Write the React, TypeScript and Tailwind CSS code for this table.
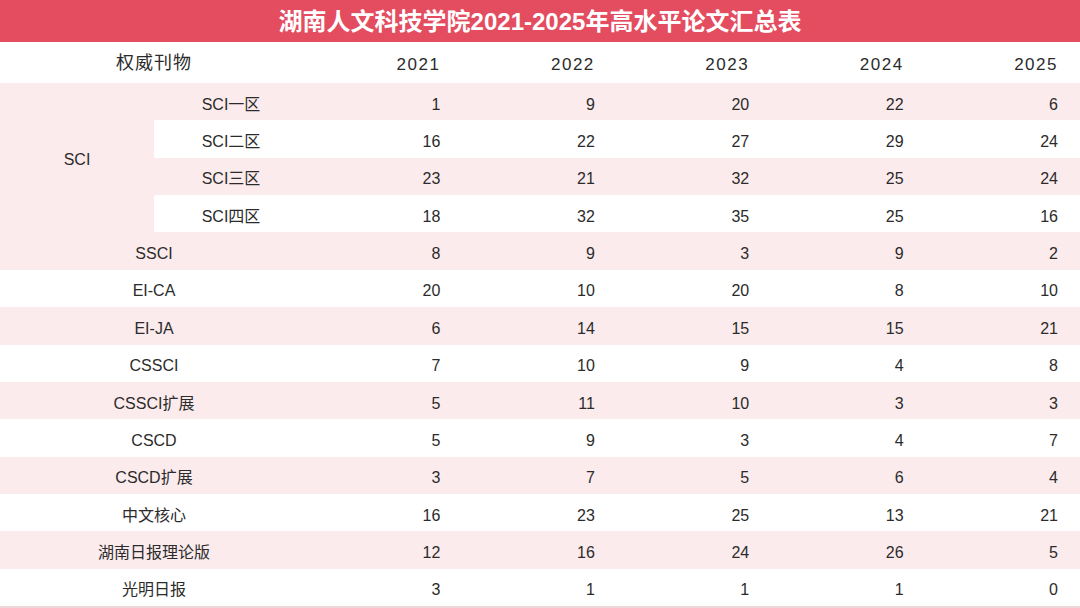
import React from 'react'

const years = ['2021', '2022', '2023', '2024', '2025']

interface Row {
  label: string
  values: number[]
  pink: boolean
}

const sciRows: Row[] = [
  { label: 'SCI一区', values: [1, 9, 20, 22, 6], pink: true },
  { label: 'SCI二区', values: [16, 22, 27, 29, 24], pink: false },
  { label: 'SCI三区', values: [23, 21, 32, 25, 24], pink: true },
  { label: 'SCI四区', values: [18, 32, 35, 25, 16], pink: false },
]

const rows: Row[] = [
  { label: 'SSCI', values: [8, 9, 3, 9, 2], pink: true },
  { label: 'EI-CA', values: [20, 10, 20, 8, 10], pink: false },
  { label: 'EI-JA', values: [6, 14, 15, 15, 21], pink: true },
  { label: 'CSSCI', values: [7, 10, 9, 4, 8], pink: false },
  { label: 'CSSCI扩展', values: [5, 11, 10, 3, 3], pink: true },
  { label: 'CSCD', values: [5, 9, 3, 4, 7], pink: false },
  { label: 'CSCD扩展', values: [3, 7, 5, 6, 4], pink: true },
  { label: '中文核心', values: [16, 23, 25, 13, 21], pink: false },
  { label: '湖南日报理论版', values: [12, 16, 24, 26, 5], pink: true },
  { label: '光明日报', values: [3, 1, 1, 1, 0], pink: false },
]

const font = { fontFamily: '"Liberation Sans", "Noto Sans CJK SC", sans-serif' }

function ValueCells({ row }: { row: Row }) {
  const bg = row.pink ? 'bg-[#fcebed]' : 'bg-white'
  return (
    <>
      {row.values.map((v, i) => (
        <div key={i} className={`${bg} flex h-[37.36px] items-center justify-end pt-[6px] pr-[22px] text-[16px] text-[#2b2b2b]`}>
          {v}
        </div>
      ))}
    </>
  )
}

export default function App() {
  return (
    <div className="h-[608px] w-[1080px] overflow-hidden bg-white" style={font}>
      {/* Title */}
      <div className="flex h-[42px] items-center justify-center bg-[#e44c60] pt-[1px] text-[24px] font-bold text-white">
        湖南人文科技学院2021-2025年高水平论文汇总表
      </div>

      <div className="grid grid-cols-[154px_154px_repeat(5,1fr)]">
        {/* Header */}
        <div className="col-span-2 flex h-[41px] items-center justify-center pt-[2px] text-[18px] tracking-[1px] text-[#2b2b2b]">
          权威刊物
        </div>
        {years.map((y) => (
          <div key={y} className="flex h-[41px] items-center justify-end pt-[4px] pr-[22px] text-[17px] tracking-[1.5px] text-[#2b2b2b]">
            {y}
          </div>
        ))}

        {/* SCI group */}
        <div className="row-span-4 flex items-center justify-center bg-[#fcebed] pt-[4px] text-[16px] text-[#2b2b2b]">
          SCI
        </div>
        {sciRows.map((r) => (
          <React.Fragment key={r.label}>
            <div className={`${r.pink ? 'bg-[#fcebed]' : 'bg-white'} flex h-[37.36px] items-center justify-center pt-[6px] text-[16px] text-[#2b2b2b]`}>
              {r.label}
            </div>
            <ValueCells row={r} />
          </React.Fragment>
        ))}

        {rows.map((r) => (
          <React.Fragment key={r.label}>
            <div className={`${r.pink ? 'bg-[#fcebed]' : 'bg-white'} col-span-2 flex h-[37.36px] items-center justify-center pt-[6px] text-[16px] text-[#2b2b2b]`}>
              {r.label}
            </div>
            <ValueCells row={r} />
          </React.Fragment>
        ))}
      </div>
      <div className="h-[2px] bg-[#ecd6d9]" />
    </div>
  )
}
